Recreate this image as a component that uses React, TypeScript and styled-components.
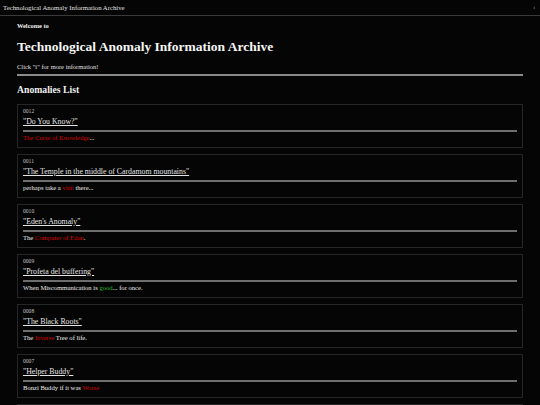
import styled, { createGlobalStyle } from "styled-components";

const GlobalStyle = createGlobalStyle`
  html, body {
    margin: 0;
    padding: 0;
    background: #050505;
  }
  body {
    font-family: "Liberation Serif", "Times New Roman", serif;
    color: #e6e6e6;
  }
`;

type Part = { text: string; tone?: "red" | "green" };

type Anomaly = {
  id: string;
  title: string;
  desc: Part[];
};

const anomalies: Anomaly[] = [
  { id: "0012", title: "\"Do You Know?\"", desc: [{ text: "The Curse of Knowledge", tone: "red" }, { text: "..." }] },
  {
    id: "0011",
    title: "\"The Temple in the middle of Cardamom mountains\"",
    desc: [{ text: "perhaps take a " }, { text: "visit", tone: "red" }, { text: " there..." }],
  },
  { id: "0010", title: "\"Eden's Anomaly\"", desc: [{ text: "The " }, { text: "Computer of Eden", tone: "red" }, { text: "." }] },
  {
    id: "0009",
    title: "\"Profeta del buffering\"",
    desc: [{ text: "When Miscommunication is " }, { text: "good", tone: "green" }, { text: "... for once." }],
  },
  { id: "0008", title: "\"The Black Roots\"", desc: [{ text: "The " }, { text: "Inverse", tone: "red" }, { text: " Tree of life." }] },
  { id: "0007", title: "\"Helper Buddy\"", desc: [{ text: "Bonzi Buddy if it was " }, { text: "Worse", tone: "red" }] },
  { id: "0006", title: "\"Unknown\"", desc: [{ text: "..." }] },
];

export default function App() {
  return (
    <>
      <GlobalStyle />
      <TopBar>
        <TopTitle>Technological Anomaly Information Archive</TopTitle>
        <InfoButton>i</InfoButton>
      </TopBar>
      <Main>
        <Welcome>Welcome to</Welcome>
        <Heading>Technological Anomaly Information Archive</Heading>
        <Hint>Click "i" for more information!</Hint>
        <Rule />
        <ListTitle>Anomalies List</ListTitle>
        <List>
          {anomalies.map((a) => (
            <Card key={a.id}>
              <Number>{a.id}</Number>
              <CardTitle href="#">{a.title}</CardTitle>
              <CardRule />
              <Desc>
                {a.desc.map((p, i) =>
                  p.tone ? (
                    <Mark key={i} $tone={p.tone}>
                      {p.text}
                    </Mark>
                  ) : (
                    <span key={i}>{p.text}</span>
                  )
                )}
              </Desc>
            </Card>
          ))}
        </List>
      </Main>
    </>
  );
}

const TopBar = styled.header`
  height: 15px;
  border-bottom: 1px solid #3a3a3a;
  display: flex;
  align-items: center;
  justify-content: space-between;
  padding: 0 5px 0 3px;
`;

const TopTitle = styled.div`
  font-size: 6.75px;
  color: #e0e0e0;
`;

const InfoButton = styled.span`
  font-size: 5px;
  color: #aaa;
`;

const Main = styled.main`
  padding: 0 17px;
`;

const Welcome = styled.div`
  font-size: 6.4px;
  font-weight: bold;
  line-height: 8px;
  margin-top: 5.5px;
  color: #f0f0f0;
`;

const Heading = styled.h1`
  font-size: 13.5px;
  line-height: 16px;
  margin: 9px 0 0;
  color: #f5f5f5;
`;

const Hint = styled.p`
  font-size: 6.5px;
  line-height: 8px;
  margin: 8.5px 0 0;
  color: #e0e0e0;
`;

const Rule = styled.div`
  height: 2px;
  background: #8a8a8a;
  margin-top: 3px;
`;

const ListTitle = styled.h2`
  font-size: 9.7px;
  line-height: 12px;
  margin: 7.5px 0 0;
  color: #f0f0f0;
`;

const List = styled.div`
  display: flex;
  flex-direction: column;
  gap: 6px;
  margin-top: 8px;
`;

const Card = styled.section`
  border: 1px solid #262626;
  padding: 2px 5px 5px;
  display: flex;
  flex-direction: column;
`;

const Number = styled.div`
  font-size: 5.6px;
  line-height: 8px;
  color: #c4c4c4;
`;

const CardTitle = styled.a`
  font-size: 7.8px;
  line-height: 10px;
  margin-top: 2px;
  color: #e4e4e4;
  text-decoration: underline;
  align-self: flex-start;
`;

const CardRule = styled.div`
  height: 2px;
  background: #6e6e6e;
  margin: 3px 0 2px;
`;

const Desc = styled.div`
  font-size: 6.6px;
  line-height: 8px;
  color: #ececec;
`;

const Mark = styled.span<{ $tone: "red" | "green" }>`
  color: ${(p) => (p.$tone === "red" ? "#d20000" : "#22b822")};
`;
